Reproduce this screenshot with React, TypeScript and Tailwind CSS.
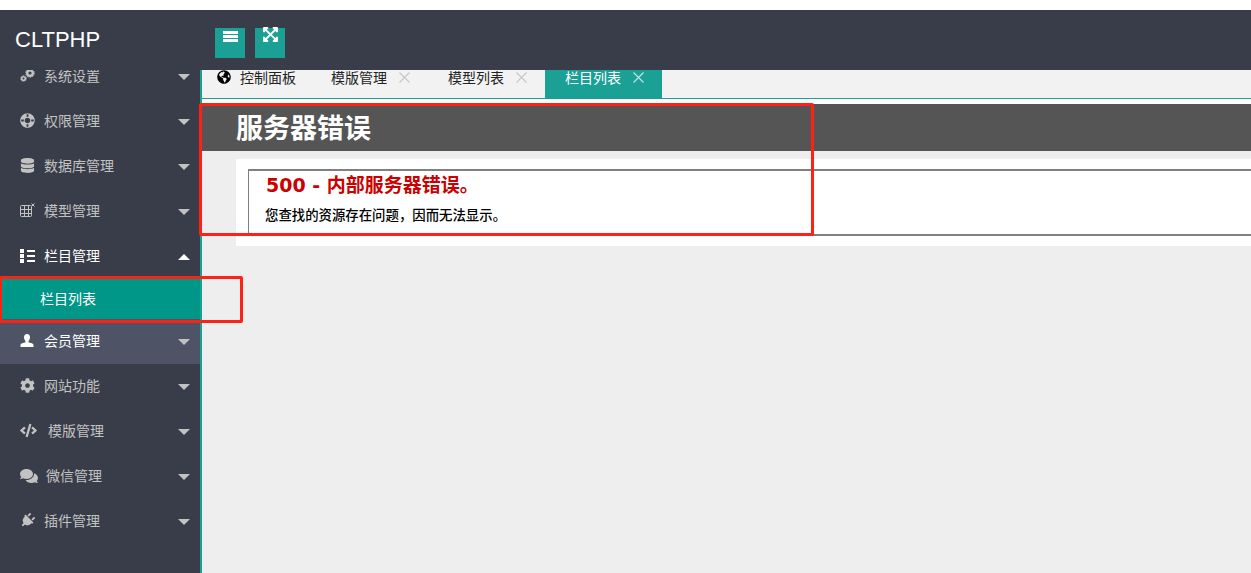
import { ReactNode } from "react";
import {
  FaCode,
  FaCog,
  FaComments,
  FaDatabase,
  FaExpandArrowsAlt,
  FaGlobeAmericas,
  FaLifeRing,
  FaPlug,
} from "react-icons/fa";

const cjk = "font-['Noto_Sans_CJK_SC','Liberation_Sans',sans-serif]";

function GearsIcon() {
  return (
    <svg width="15" height="13" viewBox="0 0 15 13" fill="none" stroke="currentColor">
      <circle cx="10" cy="4" r="2.800" strokeWidth="2.400" />
      <circle cx="10" cy="4" r="4.300" strokeWidth="1" strokeDasharray="1.500 1.200" />
      <circle cx="3.500" cy="9.500" r="1.800" strokeWidth="1.600" />
      <circle cx="3.500" cy="9.500" r="3" strokeWidth=".8" strokeDasharray="1 .9" />
    </svg>
  );
}

function ModelIcon() {
  return (
    <svg width="15" height="15" viewBox="0 0 15 15" fill="none" stroke="currentColor">
      <rect x=".5" y="2.500" width="11" height="11" rx="1" />
      <path d="M.5 6.500h11M.5 10.500h11M4.500 2.500v11M8.500 2.500v11" />
      <path d="M11.500 .5l3 3M14.500 .5l-3 3" />
    </svg>
  );
}

function ListIcon() {
  return (
    <svg width="15" height="14" viewBox="0 0 15 14" fill="currentColor">
      <path d="M0 0h4v4H0zM0 5h4v4H0zM0 10h4v4H0zM7 1h8v2H7zM7 6h8v2H7zM7 11h8v2H7z" />
    </svg>
  );
}

function UserIcon() {
  return (
    <svg width="14" height="13" viewBox="0 0 14 13" fill="currentColor">
      <path d="M7 0c2 0 3 1.400 3 3.300 0 1.500-.6 2.900-1.500 3.700v1.200c2 .6 5 1.200 5 2.800v2H.5v-2c0-1.600 3-2.200 5-2.800V7C4.600 6.200 4 4.800 4 3.300 4 1.400 5 0 7 0z" />
    </svg>
  );
}

function BarsIcon() {
  return (
    <svg width="15" height="11" viewBox="0 0 15 11" fill="currentColor">
      <path d="M0 0h15v3H0zM0 4h15v3H0zM0 8h15v3H0z" />
    </svg>
  );
}

function CloseIcon({ className }: { className: string }) {
  return (
    <svg width="11" height="11" viewBox="0 0 11 11" stroke="currentColor" strokeWidth="1.200" className={className}>
      <path d="M.5 .5l10 10M10.500 .5l-10 10" />
    </svg>
  );
}

type MenuItem = { label: string; icon: ReactNode; gap: string; open?: boolean; hover?: boolean };

const menu: MenuItem[] = [
  { label: "系统设置", icon: <GearsIcon />, gap: "w-6" },
  { label: "权限管理", icon: <FaLifeRing size={15} className="rotate-45" />, gap: "w-6" },
  { label: "数据库管理", icon: <FaDatabase size={15} />, gap: "w-6" },
  { label: "模型管理", icon: <ModelIcon />, gap: "w-6" },
  { label: "栏目管理", icon: <ListIcon />, gap: "w-6", open: true },
  { label: "会员管理", icon: <UserIcon />, gap: "w-6", hover: true },
  { label: "网站功能", icon: <FaCog size={15} />, gap: "w-6" },
  { label: "模版管理", icon: <FaCode size={17} />, gap: "w-7" },
  { label: "微信管理", icon: <FaComments size={18} />, gap: "w-[26px]" },
  { label: "插件管理", icon: <FaPlug size={15} className="rotate-45" />, gap: "w-6" },
];

function SidebarRow({ item }: { item: MenuItem }) {
  return (
    <div
      className={`flex h-[45px] items-center pb-[2px] pl-5 pr-[10px] text-[14px] ${
        item.hover ? "bg-[#4e5465]" : ""
      } ${item.open || item.hover ? "text-white" : "text-[#c2c2c2]"}`}
    >
      <span className={`flex ${item.gap} shrink-0 items-center`}>{item.icon}</span>
      <span className="flex-1">{item.label}</span>
      {item.open ? (
        <span className="mt-[2px] h-0 w-0 border-x-[6px] border-b-[6px] border-x-transparent border-b-white" />
      ) : (
        <span className="mt-[2px] h-0 w-0 border-x-[6px] border-t-[6px] border-x-transparent border-t-[#c2c2c2]" />
      )}
    </div>
  );
}

function Tab({ label, active }: { label: string; active?: boolean }) {
  return (
    <div
      className={`flex h-[28px] items-start pl-5 pr-[18px] text-[14px] leading-[15px] ${
        active ? "bg-[#1aa094] text-white" : "text-[#222]"
      }`}
    >
      <span>{label}</span>
      <CloseIcon className={`ml-3 mt-[2px] ${active ? "text-[#c2e4e0]" : "text-[#c8c8c8]"}`} />
    </div>
  );
}

export default function App() {
  return (
    <div className={`relative flex h-screen flex-col overflow-hidden bg-white pt-[10px] ${cjk}`}>
      <header className="relative z-10 flex h-[60px] shrink-0 items-start bg-[#393d49]">
        <div className="w-[215px] pl-[15px] pt-4 font-['Liberation_Sans',sans-serif] text-[22px] leading-7 text-white">
          CLTPHP
        </div>
        <div className="mt-[18px] flex gap-[10px]">
          <button className="flex h-[30px] w-[30px] justify-center bg-[#1aa094] pt-[3px] text-white">
            <BarsIcon />
          </button>
          <button className="flex h-[30px] w-[30px] justify-center bg-[#1aa094] text-white">
            <FaExpandArrowsAlt size={17} className="-mt-[2px]" />
          </button>
        </div>
      </header>

      <div className="flex min-h-0 flex-1">
        <aside className="w-[202px] shrink-0 overflow-hidden border-r-2 border-[#1aa094] bg-[#393d49]">
          <div className="-mt-4">
            {menu.slice(0, 5).map((item) => (
              <SidebarRow key={item.label} item={item} />
            ))}
            <div className="flex h-10 items-center bg-[#009688] pb-[2px] pl-10 text-[14px] text-white">栏目列表</div>
            {menu.slice(5).map((item) => (
              <SidebarRow key={item.label} item={item} />
            ))}
          </div>
        </aside>

        <main className="min-w-0 flex-1 bg-[#eeeeee]">
          <div className="flex h-[29px] border-b border-[#1aa094] bg-[#f2f2f2]">
            <div className="flex h-[28px] items-start gap-[9px] px-[15px] text-[14px] leading-[15px] text-[#222]">
              <FaGlobeAmericas size={14} className="text-black" />
              <span>控制面板</span>
            </div>
            <Tab label="模版管理" />
            <Tab label="模型列表" />
            <Tab label="栏目列表" active />
          </div>
          <div className="h-[5px] bg-white" />
          <div className="h-[47px] bg-[#555555] pl-[34px] text-[27px] font-bold leading-[46px] text-white">
            服务器错误
          </div>
          <div className="ml-[34px] mt-2 bg-white pb-[10px] pl-3 pt-[10px]">
            <div className="h-[67px] border-y-2 border-l border-y-[#808080] border-l-[#808080] pl-[17px]">
              <h2 className="font-['DejaVu_Sans','Noto_Sans_CJK_SC',sans-serif] text-[19px] font-bold leading-7 text-[#cc0000]">
                500 - 内部服务器错误。
              </h2>
              <h3 className="-ml-px mt-[5px] text-[13.400px] font-medium leading-5 text-black">
                您查找的资源存在问题，因而无法显示。
              </h3>
            </div>
          </div>
        </main>
      </div>

      {/* annotation boxes drawn on the screenshot */}
      <div className="absolute left-[199px] top-[103px] z-20 h-[133px] w-[615px] rounded-[2px] border-[3px] border-[#ff2114]" />
      <div className="absolute -left-px top-[276px] z-20 h-[47px] w-[244px] rounded-[2px] border-[3px] border-[#ff2114]" />
    </div>
  );
}
